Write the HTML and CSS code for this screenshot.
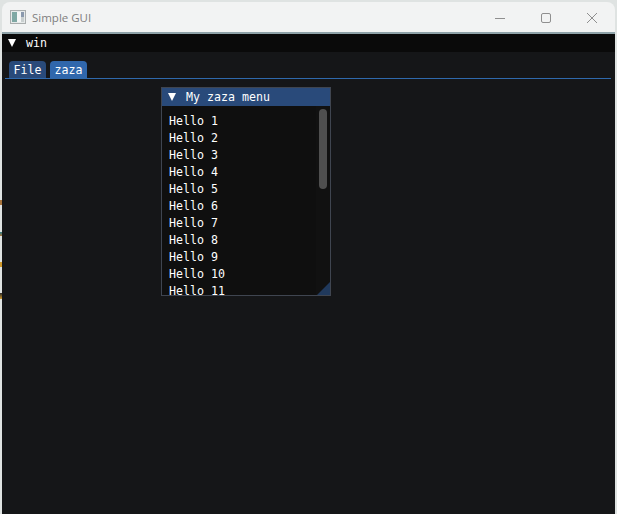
FILE: index.html
```html
<!DOCTYPE html>
<html lang="en">
<head>
<meta charset="utf-8">
<title>Simple GUI</title>
<link rel="stylesheet" href="styles.css">
</head>
<body>
<div class="window">
  <header class="titlebar">
    <svg class="app-icon" width="16" height="14" viewBox="0 0 16 14">
      <rect x="0.5" y="0.5" width="15" height="13" fill="#e6eaea" stroke="#a9adad"/>
      <rect x="2" y="2" width="5" height="10" fill="#7fa8a4"/>
      <rect x="7" y="2" width="4" height="10" fill="#f4f6f6"/>
      <rect x="11" y="2" width="3" height="5" fill="#8b99ad"/>
      <rect x="11" y="7" width="3" height="5" fill="#c9cfcf"/>
    </svg>
    <span class="app-title">Simple GUI</span>
    <div class="controls">
      <svg class="control" width="46" height="30" viewBox="0 0 46 30"><path d="M18 16.5h10" stroke="#8f8f8f" fill="none"/></svg>
      <svg class="control" width="46" height="30" viewBox="0 0 46 30"><rect x="18.5" y="11.5" width="9" height="9" rx="1.5" stroke="#8f8f8f" fill="none"/></svg>
      <svg class="control" width="46" height="30" viewBox="0 0 46 30"><path d="M18 11l10 10M28 11l-10 10" stroke="#8f8f8f" fill="none"/></svg>
    </div>
  </header>
  <main class="viewport">
    <div class="win-title">
      <span class="arrow"></span>
      <span>win</span>
    </div>
    <div class="win-body">
      <nav class="tabs">
        <span class="tab">File</span>
        <span class="tab tab-active">zaza</span>
      </nav>
    </div>
    <section class="popup">
      <div class="popup-title">
        <span class="arrow"></span>
        <span>My zaza menu</span>
      </div>
      <div class="popup-body">
        <ul class="list">
          <li>Hello 1</li>
          <li>Hello 2</li>
          <li>Hello 3</li>
          <li>Hello 4</li>
          <li>Hello 5</li>
          <li>Hello 6</li>
          <li>Hello 7</li>
          <li>Hello 8</li>
          <li>Hello 9</li>
          <li>Hello 10</li>
          <li>Hello 11</li>
        </ul>
        <div class="scrollbar"><div class="thumb"></div></div>
        <div class="grip"></div>
      </div>
    </section>
  </main>
</div>
</body>
</html>
```
FILE: styles.css
```css
* { box-sizing: border-box; }
html, body { height: 100%; }
body {
  margin: 0;
  background-color: #dfe3e2;
  background-image: linear-gradient(to bottom,
    transparent 200px, #a8743c 200px, #a8743c 205px,
    transparent 205px, transparent 232px, #2f7f86 232px, #a8743c 236px,
    transparent 236px, transparent 262px, #d09a2c 262px, #d09a2c 267px,
    transparent 267px, transparent 293px, #2a2a2a 293px, #d09a2c 299px,
    transparent 299px);
  background-size: 2px 100%;
  background-repeat: no-repeat;
  overflow: hidden;
  font-family: "DejaVu Sans Mono", monospace;
  font-size: 11.62px;
  color: #fff;
  padding: 2px 2px 0 2px;
}
.window {
  height: 100%;
  display: flex;
  flex-direction: column;
  border-radius: 8px 8px 0 0;
  overflow: hidden;
}
.titlebar {
  height: 32px;
  flex: none;
  display: flex;
  align-items: center;
  background: #f2f3f3;
  border-bottom: 2px solid #8fa3a9;
  padding-left: 8px;
}
.app-icon { margin-right: 6px; flex: none; }
.app-title {
  font-family: "Open Sans", sans-serif;
  font-size: 11.5px;
  color: #7f7f7f;
}
.controls { margin-left: auto; display: flex; }
.control { display: block; }
.viewport {
  flex: 1;
  position: relative;
  background: #151618;
  display: flex;
  flex-direction: column;
}
.win-title {
  height: 18px;
  background: #0a0a0a;
  display: flex;
  align-items: center;
  padding-left: 6px;
  gap: 10px;
}
.arrow {
  width: 0;
  height: 0;
  border-left: 4.5px solid transparent;
  border-right: 4.5px solid transparent;
  border-top: 8px solid #fff;
  flex: none;
}
.win-body { padding: 9px 4px 0 3px; }
.tabs {
  display: flex;
  gap: 4px;
  padding-left: 4px;
  border-bottom: 1px solid #2f69ac;
  height: 18px;
}
.tab {
  height: 17px;
  width: 37px;
  text-align: center;
  background: #294a7a;
  border-radius: 4px 4px 0 0;
  line-height: 18px;
}
.tab-active { background: #3067ac; }
.popup {
  position: absolute;
  left: 159px;
  top: 53px;
  width: 170px;
  height: 209px;
  border: 1px solid #3f4550;
  background: #0f0f0f;
  display: flex;
  flex-direction: column;
}
.popup-title {
  height: 18px;
  flex: none;
  background: #294a7a;
  display: flex;
  align-items: center;
  padding-left: 6px;
  gap: 10px;
}
.popup-body {
  flex: 1;
  position: relative;
  overflow: hidden;
}
.list {
  list-style: none;
  margin: 0;
  padding: 7px 0 0 7px;
}
.list li { height: 17px; line-height: 17px; }
.scrollbar {
  position: absolute;
  right: 0;
  top: 0;
  bottom: 0;
  width: 14px;
  background: #111111;
  padding: 3px 3px;
}
.thumb {
  height: 80px;
  background: #4f4f4f;
  border-radius: 4px;
}
.grip {
  position: absolute;
  right: 0;
  bottom: 0;
  width: 0;
  height: 0;
  border-left: 13px solid transparent;
  border-bottom: 13px solid #20395c;
}
```
